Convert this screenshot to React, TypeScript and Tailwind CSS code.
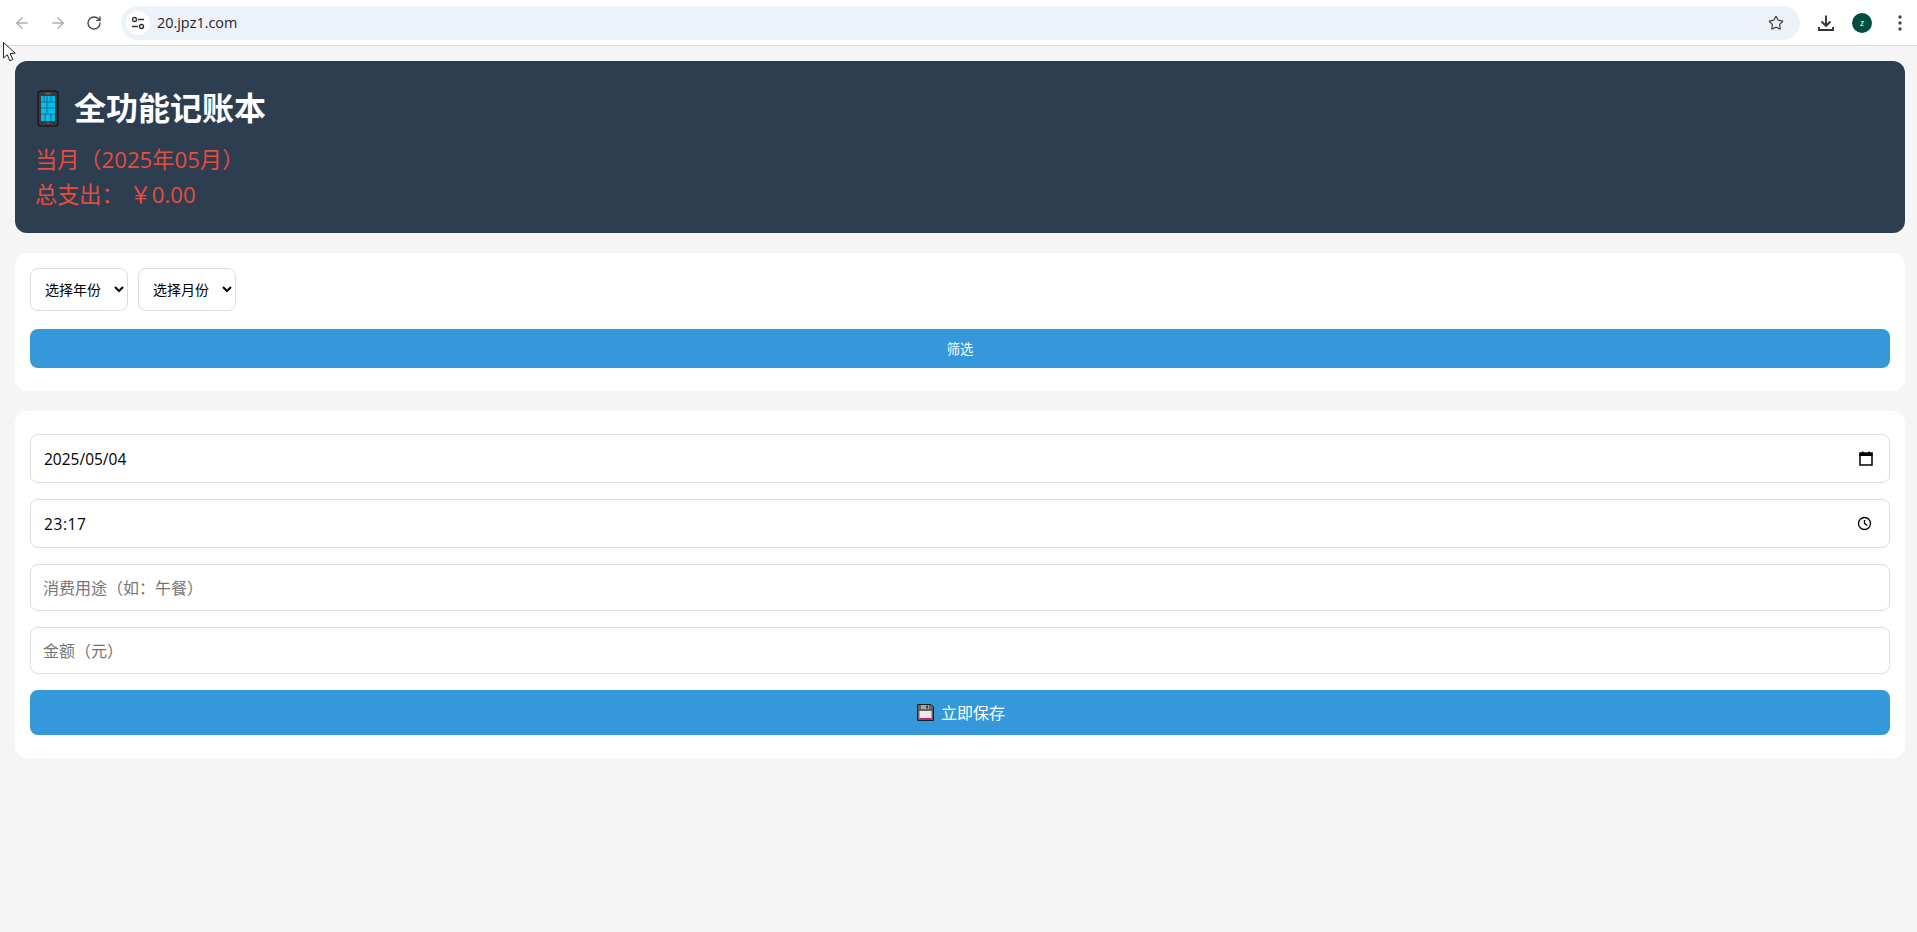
import { ArrowLeft, ArrowRight, RotateCw, Star } from 'lucide-react';

const font = "font-['Open_Sans','Noto_Sans_CJK_SC',sans-serif]";

/// Phone emoji with the tiled blue screen.
function PhoneEmoji() {
  return (
    <svg width="22" height="37" viewBox="0 0 22 37" className="ml-[2px] shrink-0">
      <rect x="0.5" y="0.5" width="21" height="36" rx="3" fill="#0c0c0c" />
      <rect x="1.500" y="1.500" width="19" height="34" rx="2" fill="#3a3a3a" />
      <rect x="4" y="6" width="14" height="25" fill="#00bdf2" />
      <path d="M4 18h14M4 24h14M10 6v18M14 6v6M7 6v6M14 24v7M8 24v7M4 12h14" stroke="#1b4a60" strokeWidth="0.7" />
      <rect x="8" y="3.200" width="6" height="1" fill="#777" />
      <rect x="10.400" y="32.600" width="1.400" height="1.400" fill="#777" />
    </svg>
  );
}

/// Floppy disk emoji for the save button.
function SaveEmoji() {
  return (
    <svg width="17" height="17" viewBox="0 0 17 17" className="shrink-0">
      <path d="M0.5 0.5h13.5l2.5 2.5v13.500h-16z" fill="#636363" stroke="#10202c" />
      <rect x="4" y="1" width="8" height="4" fill="#a8a8a8" />
      <rect x="9" y="1.500" width="2" height="3" fill="#444" />
      <rect x="2.500" y="7" width="12" height="8" fill="#ececec" />
      <rect x="2.500" y="14" width="12" height="1.500" fill="#d81b60" />
    </svg>
  );
}

function Cursor() {
  return (
    <svg width="15" height="21" viewBox="0 0 15 21" className="absolute left-[3px] top-[42px]">
      <path d="M0.5 0.5v15.500l3.700-3.400 2.600 6.200 3-1.300-2.600-6 5 -0.300z" fill="#fff" stroke="#222" strokeWidth="1" />
    </svg>
  );
}

function Toolbar() {
  return (
    <div className="flex h-[46px] items-center border-b border-[#dcdcdc] bg-white pl-[13px] pr-[7px]">
      <ArrowLeft size={18} strokeWidth={1.8} className="text-[#b0b0b0]" />
      <ArrowRight size={18} strokeWidth={1.8} className="ml-[18px] text-[#b0b0b0]" />
      <RotateCw size={16} strokeWidth={2} className="ml-[19px] text-[#474747]" />
      <div className="ml-[19px] flex h-[34px] flex-1 items-center rounded-full bg-[#edf2fa] pl-[5px] pr-[16px]">
        <div className="flex h-[24px] w-[24px] items-center justify-center rounded-full bg-white">
          <svg width="14" height="14" viewBox="0 0 14 14" fill="none" stroke="#333" strokeWidth="1.400">
            <circle cx="3.500" cy="3.500" r="2" />
            <path d="M7 3.500h6M1 10.500h6" />
            <circle cx="10.500" cy="10.500" r="2" />
          </svg>
        </div>
        <span className="ml-[7px] text-[14.4px] text-[#1f1f1f]">20.jpz1.com</span>
        <Star size={16} strokeWidth={1.8} className="ml-auto text-[#474747]" />
      </div>
      <svg width="18" height="18" viewBox="0 0 18 18" fill="none" stroke="#333" strokeWidth="1.900" className="ml-[17px]">
        <path d="M9 1.500v10M4.500 7.500 9 12l4.500-4.500M2 13v3h14v-3" />
      </svg>
      <div className="ml-[17px] flex h-[20px] w-[20px] items-center justify-center rounded-full bg-[#004d40] text-[9px] text-white">
        z
      </div>
      <svg width="4" height="16" viewBox="0 0 4 16" fill="#474747" className="ml-[26px] mr-[8px]">
        <circle cx="2" cy="2" r="1.700" />
        <circle cx="2" cy="8" r="1.700" />
        <circle cx="2" cy="14" r="1.700" />
      </svg>
    </div>
  );
}

function YearMonthSelect({ label }: { label: string }) {
  return (
    <select className="h-[43px] w-[98px] rounded-lg border border-[#ddd] bg-white px-[10px] text-[14px] text-black">
      <option>{label}</option>
    </select>
  );
}

function Field({ value, icon, className }: { value: string; icon: React.ReactNode; className?: string }) {
  return (
    <div className="flex h-[49px] items-center justify-between rounded-lg border border-[#ddd] bg-white pl-[13px] pr-[16px] text-[15.5px] text-black">
      <span className={`pt-[2px] ${className ?? ''}`}>{value}</span>
      {icon}
    </div>
  );
}

function TextField({ placeholder }: { placeholder: string }) {
  return (
    <input
      placeholder={placeholder}
      className="h-[47px] w-full rounded-lg border border-[#ddd] bg-white px-[12px] text-[16px] placeholder:text-[#757575]"
    />
  );
}

export default function App() {
  return (
    <div className={`relative min-h-[932px] bg-[#f5f5f5] ${font}`}>
      <Toolbar />
      <Cursor />
      <div className="flex flex-col gap-[20px] pl-[15px] pr-[12px] pt-[15px]">
        <header className="h-[172px] rounded-xl bg-[#2c3e50] px-[20px] pt-[22px]">
          <h1 className="flex h-[50px] items-center gap-[15px] text-[32px] font-bold leading-none text-white">
            <PhoneEmoji />
            全功能记账本
          </h1>
          <div className="mt-[9px] text-[22.2px] leading-[35px] text-[#e74c3c]">
            <p>当月（2025年05月）</p>
            <p>总支出： ￥0.00</p>
          </div>
        </header>

        <section className="h-[138px] rounded-xl bg-white px-[15px] pt-[15px]">
          <div className="flex gap-[10px]">
            <YearMonthSelect label="选择年份" />
            <YearMonthSelect label="选择月份" />
          </div>
          <button className="mt-[18px] h-[39px] w-full rounded-lg bg-[#3498db] pt-[2px] text-[13.33px] text-white">筛选</button>
        </section>

        <section className="h-[347px] rounded-xl bg-white px-[15px] pt-[23px]">
          <div className="flex flex-col gap-[16px]">
            <Field
              value="2025/05/04"
              icon={
                <svg width="14" height="15" viewBox="0 0 14 15" fill="none">
                  <path d="M1 2h12v12H1z" stroke="#000" strokeWidth="1.500" />
                  <path d="M0.500 2h13v3h-13zM3 0.500h1.500V2H3zM9.500 0.500H11V2H9.500z" fill="#000" />
                </svg>
              }
            />
            <Field
              value="23:17"
              className="tracking-[0.6px]"
              icon={
                <svg width="15" height="15" viewBox="0 0 15 15" fill="none" stroke="#000" strokeWidth="1.300" className="mr-[1px]">
                  <circle cx="7.500" cy="7.500" r="6" />
                  <path d="M7.500 4v3.500l2.800 2" />
                </svg>
              }
            />
            <TextField placeholder="消费用途（如：午餐）" />
            <TextField placeholder="金额（元）" />
            <button className="flex h-[45px] w-full items-center justify-center gap-[7px] rounded-lg bg-[#3498db] pl-[2px] text-[16px] text-white">
              <SaveEmoji />
              立即保存
            </button>
          </div>
        </section>
      </div>
    </div>
  );
}
